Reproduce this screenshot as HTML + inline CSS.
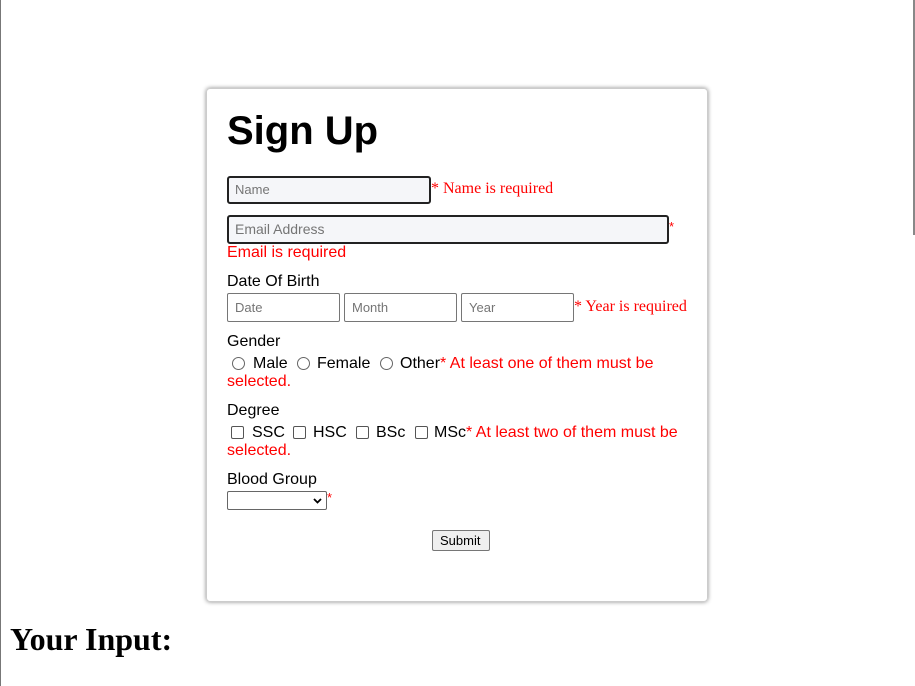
<!DOCTYPE html>
<html><head><style>
body{margin:0;width:915px;height:686px;background:#fff;font-family:"Liberation Sans",sans-serif;position:relative;overflow:hidden}
.lb{position:absolute;left:0;top:0;width:1px;height:686px;background:#777}
.rb{position:absolute;left:913px;top:0;width:2px;height:235px;background:#888}
.card{position:absolute;left:206px;top:88px;width:500px;height:512px;border:1px solid #ccc;border-radius:4px;box-shadow:0 0 4px rgba(0,0,0,.45)}
.a{position:absolute;white-space:nowrap}
h1{position:absolute;left:227px;top:108px;margin:0;font-size:40px;font-weight:bold;line-height:46px}
.in{position:absolute;box-sizing:border-box;border:1px solid #767676;border-radius:2px;font-size:13px;color:#757575;padding-left:7px;background:#fff}
.f{border:2px solid #222;border-radius:3px;background:#f5f6f9;padding-left:6px}
.red{color:#f00}
.s{font-family:"Liberation Serif",serif;font-size:16px;color:#f00}
.t{font-size:16px}
.r{position:absolute;width:11px;height:11px;border:1px solid #666;border-radius:50%}
.c{position:absolute;width:11px;height:11px;border:1px solid #555;border-radius:2px}
</style></head><body>
<div class="lb"></div><div class="rb"></div>
<div class="card"></div>
<h1>Sign Up</h1>
<div class="in f" style="left:227px;top:176px;width:204px;height:28px;line-height:24px">Name</div>
<div class="a s" style="left:431px;top:180px">* Name is required</div>
<div class="in f" style="left:227px;top:215px;width:442px;height:29px;line-height:25px;font-size:14px">Email Address</div>
<div class="a red" style="left:669px;top:219px;font-size:13px">*</div>
<div class="a red t" style="left:227px;top:244px">Email is required</div>
<div class="a t" style="left:227px;top:273px">Date Of Birth</div>
<div class="in" style="left:227px;top:293px;width:113px;height:29px;line-height:27px">Date</div>
<div class="in" style="left:344px;top:293px;width:113px;height:29px;line-height:27px">Month</div>
<div class="in" style="left:461px;top:293px;width:113px;height:29px;line-height:27px">Year</div>
<div class="a s" style="left:574px;top:298px">* Year is required</div>
<div class="a t" style="left:227px;top:333px">Gender</div>
<span class="r" style="left:232px;top:357px"></span><div class="a t" style="left:253px;top:355px">Male</div>
<span class="r" style="left:297px;top:357px"></span><div class="a t" style="left:317px;top:355px">Female</div>
<span class="r" style="left:380px;top:357px"></span><div class="a t" style="left:400px;top:355px">Other<span class="red">* At least one of them must be</span></div>
<div class="a t red" style="left:227px;top:373px">selected.</div>
<div class="a t" style="left:227px;top:402px">Degree</div>
<span class="c" style="left:231px;top:426px"></span><div class="a t" style="left:252px;top:424px">SSC</div>
<span class="c" style="left:293px;top:426px"></span><div class="a t" style="left:313px;top:424px">HSC</div>
<span class="c" style="left:356px;top:426px"></span><div class="a t" style="left:376px;top:424px">BSc</div>
<span class="c" style="left:415px;top:426px"></span><div class="a t" style="left:434px;top:424px">MSc<span class="red">* At least two of them must be</span></div>
<div class="a t red" style="left:227px;top:442px">selected.</div>
<div class="a t" style="left:227px;top:471px">Blood Group</div>
<div class="in" style="left:227px;top:491px;width:100px;height:19px;border-color:#666"><svg style="position:absolute;right:4px;top:6px" width="9" height="6"><path d="M1 1 L4.5 4.5 L8 1" stroke="#000" stroke-width="1.8" fill="none"/></svg></div>
<div class="a red" style="left:327px;top:490px;font-size:13px">*</div>
<div class="in" style="left:432px;top:530px;width:58px;height:21px;border-radius:2px;background:#efefef;color:#000;font-size:13px;line-height:19px;padding-left:7px">Submit</div>
<div class="a" style="left:10px;top:621px;font-family:'Liberation Serif',serif;font-size:32px;font-weight:bold">Your Input:</div>
</body></html>
